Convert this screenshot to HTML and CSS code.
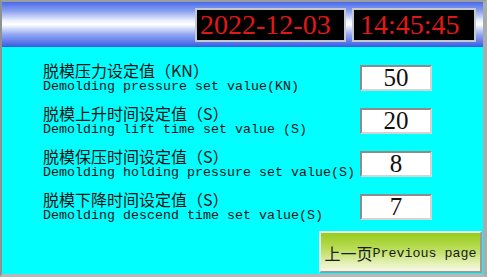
FILE: index.html
```html
<!DOCTYPE html>
<html lang="en">
<head>
    <meta charset="UTF-8">
    <title>Demolding Settings</title>
    <link rel="stylesheet" href="styles.css">
</head>
<body>
    <div class="frame">
        <div class="header">
            <div class="clock clock-date">2022-12-03</div>
            <div class="clock clock-time">14:45:45</div>
        </div>

        <div class="content">
            <div class="settings">
                <div class="setting">
                    <div class="label">
                        <div class="label-cn">脱模压力设定值（KN）</div>
                        <div class="label-en">Demolding pressure set value(KN)</div>
                    </div>
                    <div class="value-box">50</div>
                </div>
                <div class="setting">
                    <div class="label">
                        <div class="label-cn">脱模上升时间设定值（S）</div>
                        <div class="label-en">Demolding lift time set value (S)</div>
                    </div>
                    <div class="value-box">20</div>
                </div>
                <div class="setting">
                    <div class="label">
                        <div class="label-cn">脱模保压时间设定值（S）</div>
                        <div class="label-en">Demolding holding pressure set value(S)</div>
                    </div>
                    <div class="value-box">8</div>
                </div>
                <div class="setting">
                    <div class="label">
                        <div class="label-cn">脱模下降时间设定值（S）</div>
                        <div class="label-en">Demolding descend time set value(S)</div>
                    </div>
                    <div class="value-box">7</div>
                </div>
            </div>

            <button class="page-button"><span class="btn-cn">上一页</span><span class="btn-en">Previous page</span></button>
        </div>
    </div>
</body>
</html>
```

FILE: styles.css
```css
* {
    margin: 0;
    padding: 0;
    box-sizing: border-box;
}

body {
    width: 487px;
    height: 277px;
    overflow: hidden;
    background: #c0c0c0;
    font-family: "Liberation Mono", "Noto Sans CJK SC", monospace;
    color: #111;
}

.frame {
    width: 487px;
    height: 277px;
    display: flex;
    flex-direction: column;
    border-top: 2px solid #9a9e9e;
    border-left: 2px solid #8c9292;
    border-right: 4px solid #a8acac;
    border-bottom: 3px solid #b4b8b8;
    background: #00ffff;
}

.header {
    height: 45px;
    display: flex;
    justify-content: flex-end;
    align-items: center;
    gap: 6px;
    padding-right: 7px;
    background: linear-gradient(to bottom, #4a6aea 0%, #8aa0f0 20%, #eef2fd 42%, #ffffff 50%, #93a8f2 72%, #3a5ae4 100%);
}

.clock {
    height: 34px;
    background: #000;
    border: 2px solid #c4c8d0;
    color: #e01818;
    font-family: "Liberation Serif", serif;
    font-size: 28px;
    line-height: 30px;
    padding-left: 3px;
}

.clock-date {
    width: 151px;
}

.clock-time {
    width: 124px;
    padding-left: 6px;
}

.content {
    flex: 1;
    display: flex;
    flex-direction: column;
    padding-top: 14px;
}

.settings {
    display: flex;
    flex-direction: column;
    gap: 10px;
    padding-left: 41px;
}

.setting {
    display: grid;
    grid-template-columns: 317px 72px;
    align-items: center;
    height: 33px;
}

.label-cn {
    font-family: "Noto Sans CJK SC", sans-serif;
    font-size: 16px;
    line-height: 18px;
    color: #151515;
}

.label-en {
    font-size: 13.33px;
    line-height: 15px;
    white-space: nowrap;
    color: #151515;
}

.value-box {
    height: 26px;
    background: #fff;
    border: 2px solid;
    border-color: #8c8c8c #d4d4d4 #d4d4d4 #8c8c8c;
    text-align: center;
    font-family: "Liberation Serif", serif;
    font-size: 25px;
    line-height: 21px;
    color: #111;
}

.page-button {
    margin-top: auto;
    margin-bottom: 1px;
    margin-right: 1px;
    align-self: flex-end;
    width: 163px;
    height: 42px;
    border: 2px solid;
    border-color: #e8e8e8 #9a9a9a #9a9a9a #e8e8e8;
    background: linear-gradient(to bottom, #98cc1c 0%, #b8dc55 40%, #dfeeaa 75%, #f6f9e6 100%);
    color: #1a1a1a;
    font-family: "Liberation Mono", monospace;
    display: flex;
    align-items: center;
    justify-content: center;
    padding-top: 2px;
}

.btn-cn {
    font-family: "Noto Sans CJK SC", sans-serif;
    font-size: 16px;
    width: 48px;
}

.btn-en {
    font-size: 13.33px;
}
```
